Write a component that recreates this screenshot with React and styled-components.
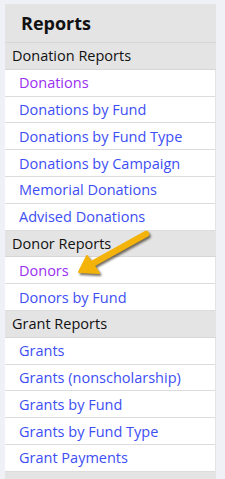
import React from "react";
import styled, { createGlobalStyle } from "styled-components";

const GlobalStyle = createGlobalStyle`
    body {
        margin: 0;
        background-color: #f0f1f6;
        font-family: "Open Sans", "DejaVu Sans", sans-serif;
    }
`;

const Panel = styled.div`
    position: relative;
    width: 211px;
    margin: 4px 0 0 5px;
    background-color: #e4e4e4;
    padding-bottom: 20px;
`;

const Title = styled.h2`
    margin: 0;
    height: 38px;
    padding-left: 16px;
    display: flex;
    align-items: center;
    font-size: 18px;
    font-weight: 700;
    color: #111;
    border-bottom: 1px solid #d6d6d6;
`;

const SectionHeader = styled.div`
    height: 25.8px;
    padding-left: 7px;
    display: flex;
    align-items: center;
    font-size: 14.5px;
    color: #111;
    border-bottom: 1px solid #d6d6d6;
`;

const Row = styled.a`
    height: 25.8px;
    margin-right: 1px;
    padding-left: 14px;
    display: flex;
    align-items: center;
    font-size: 14.5px;
    text-decoration: none;
    background-color: white;
    color: ${props => props.visited ? "#9a2ff2" : "#3d4ef4"};
    border-bottom: 1px solid #dcdcdc;
`;

const Pointer = styled.svg`
    position: absolute;
    left: 65px;
    top: 221px;
    width: 90px;
    height: 60px;
    pointer-events: none;
`;

const sections = [
    {
        title: "Donation Reports",
        links: [
            { label: "Donations", visited: true },
            { label: "Donations by Fund" },
            { label: "Donations by Fund Type" },
            { label: "Donations by Campaign" },
            { label: "Memorial Donations" },
            { label: "Advised Donations" },
        ],
    },
    {
        title: "Donor Reports",
        links: [
            { label: "Donors", visited: true },
            { label: "Donors by Fund" },
        ],
    },
    {
        title: "Grant Reports",
        links: [
            { label: "Grants" },
            { label: "Grants (nonscholarship)" },
            { label: "Grants by Fund" },
            { label: "Grants by Fund Type" },
            { label: "Grant Payments" },
        ],
    },
];

const Arrow = ({ color, ...rest }) => (
    <g {...rest}>
        <line x1="76" y1="9" x2="22" y2="39" stroke={color} strokeWidth="6.5" strokeLinecap="round" />
        <polygon points="9,47 17,31 29,48" fill={color} stroke={color} strokeWidth="2" strokeLinejoin="round" />
    </g>
);

const App = () => {
    return (
        <>
            <GlobalStyle />
            <Panel>
                <Title>Reports</Title>
                {sections.map(section => (
                    <div key={section.title}>
                        <SectionHeader>{section.title}</SectionHeader>
                        {section.links.map(link => (
                            <Row key={link.label} href="#" visited={link.visited ? 1 : 0}>
                                {link.label}
                            </Row>
                        ))}
                    </div>
                ))}
                <Pointer viewBox="0 0 90 60">
                    <defs>
                        <filter id="soft" x="-20%" y="-20%" width="140%" height="140%">
                            <feGaussianBlur stdDeviation="1" />
                        </filter>
                    </defs>
                    <Arrow color="#3a3020" opacity="0.7" transform="translate(1.5 2)" filter="url(#soft)" />
                    <Arrow color="#f4b30a" />
                </Pointer>
            </Panel>
        </>
    );
};

export default App;
